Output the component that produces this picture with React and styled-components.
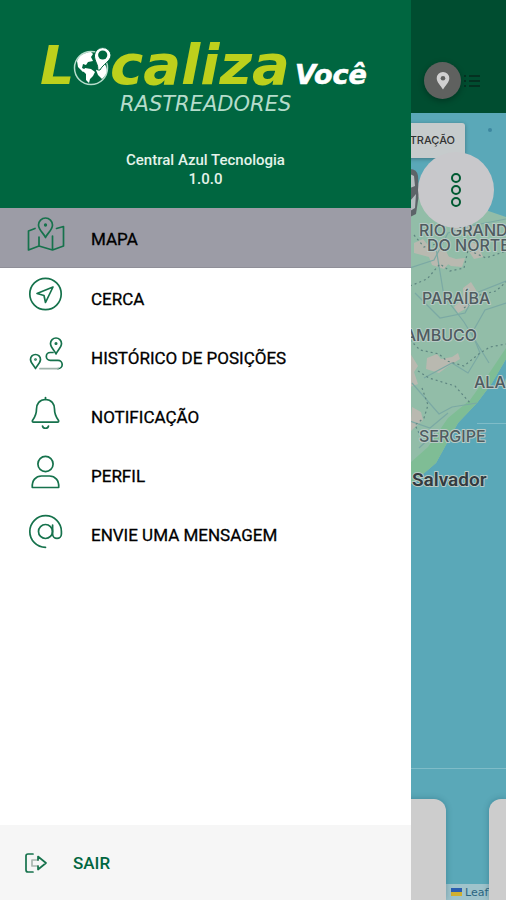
import React from 'react';
import styled, { createGlobalStyle } from 'styled-components';

const colors = {
    green: '#006640',
    darkGreen: '#004d30',
    lime: '#bdd01c',
    sea: '#5aa8b8',
    panel: '#cdcdcd',
    active: '#9c9ca6'
};

const GlobalStyle = createGlobalStyle`
    * {
        box-sizing: border-box;
    }

    body {
        margin: 0;
        font-family: Roboto, 'Liberation Sans', sans-serif;
        background-color: ${colors.sea};
    }
`;

const Page = styled.div`
    position: relative;
    display: flex;
    flex-direction: column;
    min-height: 100vh;
    overflow: hidden;
`;

const TopBar = styled.header`
    display: flex;
    justify-content: flex-end;
    align-items: flex-end;
    gap: 2px;
    height: 113px;
    padding: 0 25px 14px;
    background-color: ${colors.darkGreen};
`;

const RoundButton = styled.button`
    display: flex;
    align-items: center;
    justify-content: center;
    width: 37px;
    height: 37px;
    padding: 0;
    border: none;
    border-radius: 50%;
    background-color: #5f615f;
    box-shadow: 0 2px 6px rgba(0, 0, 0, 0.3);
`;

const ListButton = styled.button`
    display: flex;
    align-items: center;
    height: 37px;
    padding: 0;
    border: none;
    background: none;
`;

const MapArea = styled.main`
    position: relative;
    flex: 1;
    background-color: ${colors.sea};
`;

const MapDrawing = styled.svg`
    position: absolute;
    top: 0;
    right: 0;
    width: 96px;
    height: 100%;
`;

const MapLabel = styled.text`
    font-family: ${(p) => (p.$city ? 'Roboto' : 'Inter')}, sans-serif;
    font-size: ${(p) => (p.$city ? 19 : 16)}px;
    font-weight: ${(p) => (p.$city ? 600 : 500)};
    fill: ${(p) => (p.$city ? '#333b40' : '#4f5c60')};
    stroke: #b9cbc6;
    stroke-width: 2px;
    stroke-linejoin: round;
    paint-order: stroke;
`;

const VehicleTag = styled.div`
    position: absolute;
    top: 10px;
    right: 41px;
    padding: 10px;
    border-radius: 3px;
    background-color: #c6cbcc;
    box-shadow: 0 1px 4px rgba(0, 0, 0, 0.3);
    color: #333;
    font-family: Inter, sans-serif;
    font-size: 11px;
    font-weight: 500;
    line-height: 15px;
`;

const MoreButton = styled.button`
    position: absolute;
    top: 39px;
    right: 12px;
    display: flex;
    align-items: center;
    justify-content: center;
    width: 76px;
    height: 76px;
    padding: 0;
    border: none;
    border-radius: 50%;
    background-color: #c8c8cb;
`;

const Attribution = styled.a`
    position: absolute;
    right: 0;
    bottom: 0;
    display: flex;
    align-items: center;
    gap: 3px;
    width: 60px;
    height: 16px;
    padding-left: 5px;
    background-color: #9fc3cb;
    color: #2b6580;
    font-family: 'DejaVu Sans', sans-serif;
    font-size: 11px;
    text-decoration: none;
`;

const Cards = styled.div`
    position: absolute;
    left: 20px;
    right: 0;
    bottom: 0;
    display: flex;
    gap: 43px;
    height: 101px;
`;

const Card = styled.div`
    flex: ${(p) => (p.$next ? '0 0 17px' : '1')};
    border-radius: ${(p) => (p.$next ? '12px 0 0 0' : '12px 12px 0 0')};
    background-color: ${colors.panel};
    box-shadow: 0 0 6px rgba(0, 60, 80, 0.3);
`;

const Drawer = styled.aside`
    position: absolute;
    top: 0;
    left: 0;
    bottom: 0;
    right: 95px;
    display: flex;
    flex-direction: column;
    background-color: white;
`;

const Brand = styled.div`
    display: flex;
    flex-direction: column;
    align-items: center;
    height: 208px;
    padding-top: 32px;
    background-color: ${colors.green};
    color: #e4f3ea;
    font-size: 15px;
    font-weight: 500;
    line-height: 19px;
    text-align: center;
`;

const Logo = styled.svg`
    margin-bottom: 31px;
    font-family: 'DejaVu Sans', sans-serif;
    font-style: italic;
`;

const Menu = styled.ul`
    flex: 1;
    margin: 0;
    padding: 0;
    list-style: none;
`;

const MenuLink = styled.a`
    display: flex;
    align-items: flex-start;
    gap: 26px;
    height: ${(p) => (p.$active ? 60 : 59)}px;
    padding: 8px 27px 0;
    background-color: ${(p) => (p.$active ? colors.active : 'white')};
    border-bottom: ${(p) => (p.$active ? '1px solid #8f8f98' : 'none')};
    color: black;
    font-size: 17px;
    line-height: 46px;
    -webkit-text-stroke: 0.3px;
    text-decoration: none;
`;

const Icon = styled.svg`
    flex: none;
    fill: none;
    stroke: #16724c;
    stroke-width: 1.7;
    stroke-linecap: round;
    stroke-linejoin: round;
`;

const Logout = styled.button`
    display: flex;
    align-items: center;
    gap: 25px;
    height: 75px;
    padding: 0 24px;
    border: none;
    background-color: #f6f6f6;
    color: ${colors.green};
    font-family: inherit;
    font-size: 17px;
    font-weight: 500;
`;

const MapIcon = () => (
    <>
        <path d="M8 12.5L1.5 15V34L12 30L25.5 34L36.5 30V10.5L29.5 12.5M12 21V30M25.5 20V34" />
        <path d="M18.5 21.5C17 17.5 11.5 14 11.5 9a7 7 0 0 1 14 0c0 5-5.5 8.5-7 12.5z" />
        <circle cx="18.5" cy="9" r="0.8" />
    </>
);

const FenceIcon = () => (
    <>
        <circle cx="18.5" cy="18" r="15.7" />
        <path d="M26 11L10 17.5L17 19.5L18.5 26.5z" />
    </>
);

const RouteIcon = () => (
    <>
        <path d="M29 19C28 16 23.5 12.5 23.5 8.5a5.5 5.5 0 0 1 11 0c0 4-4.5 7.5-5.5 10.5z" />
        <path d="M8.5 33.5C7.5 31 3.5 28 3.5 24.5a5 5 0 0 1 10 0c0 3.5-4 6.5-5 9z" />
        <circle cx="29" cy="8.5" r="0.7" />
        <circle cx="8.5" cy="24.5" r="0.5" />
        <path d="M26 17.5H23.2a3.9 3.9 0 0 0 0 7.8H31a4.2 4.2 0 0 1 0 8.4" />
        <path d="M31 33.7H13" stroke="#9fb3aa" />
    </>
);

const BellIcon = () => (
    <>
        <path d="M18.5 3.5v2" />
        <path d="M18.5 5.5c-6 0-9 4.5-9 9.5 0 6-2 8.5-3.8 11-.8 1.2-.2 2.2.8 2.2h24c1 0 1.6-1 .8-2.2-1.8-2.5-3.8-5-3.8-11 0-5-3-9.5-9-9.5z" />
        <path d="M15.5 32c.6 3 5.4 3 6 0" />
    </>
);

const UserIcon = () => (
    <>
        <circle cx="18.5" cy="11" r="7.6" />
        <path d="M5.3 34.5c-.6-7 3.5-11.5 9.2-11.5h8c5.7 0 9.8 4.5 9.2 11.5z" />
    </>
);

const AtIcon = () => (
    <>
        <circle cx="18.5" cy="19.5" r="7" />
        <path d="M25.6 13V22a4.4 4.4 0 0 0 8.8 0v-2.500A15.8 15.8 0 1 0 18.5 35.3" />
    </>
);

const items = [
    { label: 'MAPA', icon: MapIcon, active: true },
    { label: 'CERCA', icon: FenceIcon },
    { label: 'HISTÓRICO DE POSIÇÕES', icon: RouteIcon },
    { label: 'NOTIFICAÇÃO', icon: BellIcon },
    { label: 'PERFIL', icon: UserIcon },
    { label: 'ENVIE UMA MENSAGEM', icon: AtIcon }
];

const BrandLogo = () => (
    <Logo width="335" height="88" viewBox="0 0 335 88">
        <text x="2" y="52" fill={colors.lime} fontSize="54" fontWeight="700">
            L
        </text>
        <text x="72" y="52" fill={colors.lime} fontSize="56" fontWeight="700">
            caliza
        </text>
        <circle cx="53" cy="36" r="16.5" fill="none" stroke="#b5dccb" strokeWidth="1.5" />
        <g fill="white">
            <path d="M39 29c2-5 7-8.5 14-9l2 2-2 3 2 4-5 1-2 3-3-1-1 4 4 2-3 2-5-5z" />
            <path d="M47 36l6 1 4 3-2 4-3 3-1 4-3-3 0-6-3-3z" />
            <path d="M66 31c4 5 4 11-2 16l-4-4-2-5 4-1z" />
            <path
                d="M59.5 38C61 33 56 29 56.5 23a8.3 8.3 0 0 1 16.5 0c0 6-8 9-11 15z"
                stroke={colors.green}
                strokeWidth="1"
            />
        </g>
        <circle cx="64.7" cy="23" r="4.6" fill={colors.green} />
        <text x="257" y="52" fill="white" stroke="white" strokeWidth="0.6" fontSize="27" fontWeight="700">
            Você
        </text>
        <text x="82" y="79" fill="#b5dccb" fontSize="21">
            RASTREADORES
        </text>
    </Logo>
);

const CoastMap = () => (
    <MapDrawing viewBox="0 0 96 787" preserveAspectRatio="xMaxYMin slice">
        <path d="M0 84L20 78L96 104V246L82 270L67 290L48 310L37 330L26 350L12 362L0 372z" fill="#92bda8" />
        <path d="M96 246L82 270L67 290L48 310L37 330L26 350L12 362L0 372V350L18 334L38 305L60 287L78 262L96 235z" fill="#7fbd95" />
        <g fill="#b9b9b0">
            <path d="M4 130l9-4 8 10 14 0 6 12-7 8-12-4-3-8-15-4z" />
            <path d="M34 142l12 4 9-1-3 9-11-1-8-5z" />
            <path d="M60 128l8 4 5 12-9 2-6-9z" />
            <path d="M53 175l8-6 5 8 2 12-9 5-11 6-4-6 9-9z" />
            <path d="M17 245l10-4 4 5 11-2 6-4 2 6-13 8-8 6-13-4z" />
            <path d="M0 240l8 13-4 6 4 12-8 3zM2 294l9 5 2 8-9 8-4 4z" />
            <path d="M42 112l15-4 13 9-10 5-17-2z" />
        </g>
        <g fill="none" stroke="#7ba9a4" strokeWidth="1.2">
            <path d="M0 155L24 147L38 120L60 113L96 106" />
            <path d="M5 180L30 205L55 200L66 180L96 168" />
            <path d="M14 265L42 250L58 260L70 240L62 220L75 197L96 190" />
            <path d="M2 270L29 301L42 294L67 290M26 135L34 183L54 209L79 250" />
            <path d="M0 308L20 315L38 300M9 335L25 320" />
        </g>
        <g fill="none" stroke="#5e8580" strokeWidth="1.2" strokeDasharray="2 3">
            <path d="M0 173L17 166L30 151L40 158L54 155L58 137L76 145L96 138" />
            <path d="M0 227L10 237L29 241L37 248L54 253L70 240L80 234L96 231" />
            <path d="M8 258L19 265L45 273L61 291" />
            <path d="M4 122L14 134L30 130M54 195L70 182L86 178L96 169" />
            <path d="M12 275L18 292L14 305L5 312L10 322" />
        </g>
        <path d="M67 310.5H96M0 655.5H96" stroke="#7fbcc8" strokeWidth="1" />
        <circle cx="80" cy="17" r="2" fill="#3d87a0" />
        <path d="M0 56q7 0 8 7l1 18-3 20-6 3z" fill="#5c6468" />
        <path d="M0 61l4 2 1 10-5 2zM0 88l6-7-1 14-5 3z" fill="#b5bdc0" />
        <MapLabel x="9" y="123">RIO GRANDE</MapLabel>
        <MapLabel x="17" y="138">DO NORTE</MapLabel>
        <MapLabel x="12" y="191">PARAÍBA</MapLabel>
        <MapLabel x="67" y="228" textAnchor="end">PERNAMBUCO</MapLabel>
        <MapLabel x="64" y="275">ALAGOAS</MapLabel>
        <MapLabel x="9" y="329">SERGIPE</MapLabel>
        <MapLabel x="2" y="373" $city>Salvador</MapLabel>
    </MapDrawing>
);

const App = () => {
    return (
        <Page>
            <GlobalStyle />
            <TopBar>
                <RoundButton aria-label="Localização">
                    <svg width="14" height="18" viewBox="0 0 14 18">
                        <path
                            d="M7 0a6.3 6.3 0 0 1 6.3 6.3C13.3 10.5 9 14 7 17.5 5 14 .7 10.5.7 6.3A6.3 6.3 0 0 1 7 0z"
                            fill="#d0d0d0"
                        />
                        <circle cx="7" cy="6.3" r="2.3" fill="#5f615f" />
                    </svg>
                </RoundButton>
                <ListButton aria-label="Lista">
                    <svg width="18" height="14" viewBox="0 0 18 14" stroke="#06291c" strokeWidth="1.3">
                        <path d="M1 2h2M6 2h11M1 7h2M6 7h11M1 12h2M6 12h11" />
                    </svg>
                </ListButton>
            </TopBar>
            <MapArea>
                <CoastMap />
                <VehicleTag>DEMONSTRAÇÃO</VehicleTag>
                <MoreButton aria-label="Mais opções">
                    <svg width="12" height="36" viewBox="0 0 12 36" fill="none" stroke="#005a32" strokeWidth="2">
                        <circle cx="6" cy="6" r="4" />
                        <circle cx="6" cy="18" r="4" />
                        <circle cx="6" cy="30" r="4" />
                    </svg>
                </MoreButton>
                <Attribution href="#leaflet">
                    <svg width="11" height="8" viewBox="0 0 11 8">
                        <path d="M0 0h11v4H0z" fill="#2b5db0" />
                        <path d="M0 4h11v4H0z" fill="#d0b030" />
                    </svg>
                    Leaflet
                </Attribution>
                <Cards>
                    <Card />
                    <Card $next />
                </Cards>
            </MapArea>
            <Drawer>
                <Brand>
                    <BrandLogo />
                    <div>Central Azul Tecnologia</div>
                    <div>1.0.0</div>
                </Brand>
                <Menu>
                    {items.map((item) => {
                        const Drawing = item.icon;
                        return (
                            <li key={item.label}>
                                <MenuLink href="#" $active={item.active}>
                                    <Icon width="38" height="38" viewBox="0 0 38 38">
                                        <Drawing />
                                    </Icon>
                                    {item.label}
                                </MenuLink>
                            </li>
                        );
                    })}
                </Menu>
                <Logout>
                    <Icon width="24" height="24" viewBox="0 0 24 24">
                        <path d="M9 3H4a2 2 0 0 0-2 2v14a2 2 0 0 0 2 2h5" />
                        <path d="M14 9H8v6h6" stroke="#a9b5af" />
                        <path d="M14 9V5.5l8 6.5-8 6.5V15" />
                    </Icon>
                    SAIR
                </Logout>
            </Drawer>
        </Page>
    );
};

export default App;
